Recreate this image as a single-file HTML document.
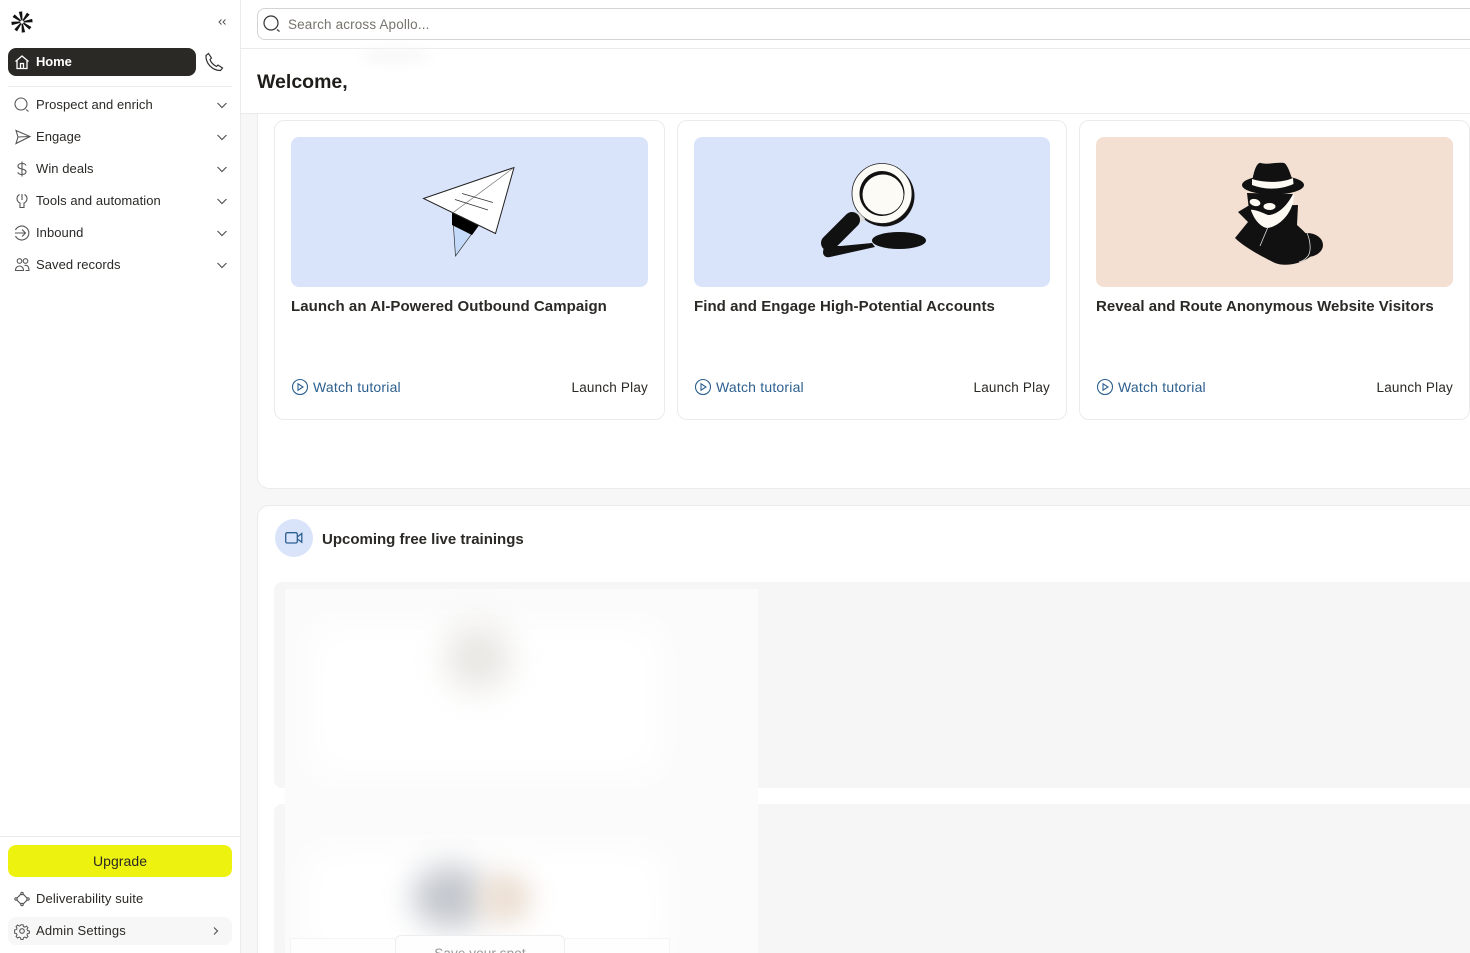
<!DOCTYPE html>
<html><head><meta charset="utf-8"><style>
*{box-sizing:border-box}
html,body{margin:0;padding:0;width:1470px;height:953px;overflow:hidden;background:#fff;font-family:"Liberation Sans",sans-serif;color:#2b2925}
#root{position:relative;width:1470px;height:953px;overflow:hidden}
.a{position:absolute}
.t{position:absolute;white-space:nowrap;font-size:13px;line-height:16px;letter-spacing:.06px}
.card{position:absolute;top:120px;height:300px;background:#fff;border:1px solid #ebebeb;border-radius:10px}
.img{position:absolute;top:137px;height:150px;border-radius:8px}
.ct{position:absolute;top:298px;font-size:15px;line-height:18px;font-weight:700;letter-spacing:.06px;white-space:nowrap}
.wt{position:absolute;top:379px;font-size:14px;line-height:16px;color:#2d5f8f;white-space:nowrap;letter-spacing:.2px}
.lp{position:absolute;top:380px;font-size:13.5px;line-height:16px;white-space:nowrap;letter-spacing:.2px}
svg{position:absolute;overflow:visible}
</style></head><body><div id="root">
<!-- main bg -->
<div class="a" style="left:241px;top:114px;width:1229px;height:839px;background:#f7f7f7"></div>
<div class="a" style="left:241px;top:48px;width:1229px;height:1px;background:#ebebeb"></div>
<div class="a" style="left:241px;top:113px;width:1229px;height:1px;background:#ebebeb"></div>
<!-- sidebar -->
<div class="a" style="left:0;top:0;width:241px;height:953px;background:#fff;border-right:1px solid #ebebeb"></div>
<svg style="left:11px;top:11px" width="22" height="22" viewBox="0 0 22 22" fill="#111">
<g transform="rotate(-8 11 11)">
<path d="M10.300 9.300L9.300 .5h3.400L11.700 9.300Z"/>
<path transform="rotate(45 11 11)" d="M10.300 9.300L9.300 .5h3.400L11.700 9.300Z"/>
<path transform="rotate(90 11 11)" d="M10.300 9.300L9.300 .5h3.400L11.700 9.300Z"/>
<path transform="rotate(135 11 11)" d="M10.300 9.300L9.300 .5h3.400L11.700 9.300Z"/>
<path transform="rotate(180 11 11)" d="M10.300 9.300L9.300 .5h3.400L11.700 9.300Z"/>
<path transform="rotate(225 11 11)" d="M10.300 9.300L9.300 .5h3.400L11.700 9.300Z"/>
<path transform="rotate(270 11 11)" d="M10.300 9.300L9.300 .5h3.400L11.700 9.300Z"/>
<path transform="rotate(315 11 11)" d="M10.300 9.300L9.300 .5h3.400L11.700 9.300Z"/>
</g></svg>
<svg style="left:217px;top:17px" width="10" height="10" viewBox="0 0 10 10" fill="none" stroke="#555" stroke-width="1"><path d="M4.500 2.500L2 5l2.500 2.500M8.500 2.500L6 5l2.500 2.500"/></svg>
<div class="a" style="left:8px;top:48px;width:188px;height:28px;background:#2b2925;border-radius:8px"></div>
<svg style="left:14px;top:54px" width="16" height="16" viewBox="0 0 16 16" fill="none" stroke="#fff" stroke-width="1.300"><path d="M1.500 7.500L8 2l6.500 5.500M3 6.500V14.500h10V6.500M6.500 14.500V9.500h3v5"/></svg>
<div class="t" style="left:36px;top:54px;color:#fff;font-weight:700;letter-spacing:-.1px">Home</div>
<svg style="left:204px;top:52px" width="20" height="20" viewBox="0 0 20 20" fill="none" stroke="#333" stroke-width="1.200"><path d="M2 3.500L4.500 1.500 7.500 6 6 7.500C7 10.500 9.500 13 12.500 14.500L14 13l4.500 3-2 2.500C8 18.500 1.500 11 2 3.500Z"/></svg>
<div class="a" style="left:8px;top:86px;width:224px;height:1px;background:#ebebeb"></div>

<svg style="left:14px;top:97px" width="16" height="16" viewBox="0 0 16 16" fill="none" stroke="#555" stroke-width="1.100"><circle cx="7" cy="7" r="6"/><path d="M12 12.500l2.500 2"/></svg>
<div class="t" style="left:36px;top:97px">Prospect and enrich</div>
<svg style="left:15px;top:129px" width="16" height="16" viewBox="0 0 16 16" fill="none" stroke="#555" stroke-width="1.100"><path d="M1 1.500L15 7.500 1 14.500 3 8ZM3 8L15 7.500"/></svg>
<div class="t" style="left:36px;top:129px">Engage</div>
<svg style="left:14px;top:161px" width="16" height="16" viewBox="0 0 16 16" fill="none" stroke="#555" stroke-width="1.100"><path d="M8 .5v15M12 4.500C11.500 3 10 2.500 8 2.500 5.500 2.500 4 3.500 4 5.200 4 9 12 7 12 10.800c0 1.700-1.500 2.700-4 2.700-2.200 0-3.700-.7-4.200-2.200"/></svg>
<div class="t" style="left:36px;top:161px">Win deals</div>
<svg style="left:14px;top:193px" width="16" height="16" viewBox="0 0 16 16" fill="none" stroke="#555" stroke-width="1.100"><path d="M5.500 1.500C3.800 2.500 3 4 3 5.500 3 8 4.800 9.700 6 10v4.500h4V10c1.200-.3 3-2 3-4.500 0-1.500-.8-3-2.500-4M8 1v6"/></svg>
<div class="t" style="left:36px;top:193px">Tools and automation</div>
<svg style="left:14px;top:225px" width="16" height="16" viewBox="0 0 16 16" fill="none" stroke="#555" stroke-width="1.100"><path d="M1.500 5A7 7 0 1 1 1.500 11M1 8h10M8 4.500L11.500 8 8 11.500"/></svg>
<div class="t" style="left:36px;top:225px">Inbound</div>
<svg style="left:14px;top:257px" width="16" height="16" viewBox="0 0 16 16" fill="none" stroke="#555" stroke-width="1.100"><circle cx="5.500" cy="4" r="2.300"/><circle cx="11.500" cy="4" r="2.300"/><path d="M1.500 13.500c0-6 8-6 8 0ZM10.500 8.500c2.500-.8 4.500.8 4.500 5h-3.500"/></svg>
<div class="t" style="left:36px;top:257px">Saved records</div>

<svg style="left:216px;top:99px" width="12" height="12" viewBox="0 0 12 12" fill="none" stroke="#555" stroke-width="1.200"><path d="M1.500 4L6 8.500 10.500 4"/></svg>
<svg style="left:216px;top:131px" width="12" height="12" viewBox="0 0 12 12" fill="none" stroke="#555" stroke-width="1.200"><path d="M1.500 4L6 8.500 10.500 4"/></svg>
<svg style="left:216px;top:163px" width="12" height="12" viewBox="0 0 12 12" fill="none" stroke="#555" stroke-width="1.200"><path d="M1.500 4L6 8.500 10.500 4"/></svg>
<svg style="left:216px;top:195px" width="12" height="12" viewBox="0 0 12 12" fill="none" stroke="#555" stroke-width="1.200"><path d="M1.500 4L6 8.500 10.500 4"/></svg>
<svg style="left:216px;top:227px" width="12" height="12" viewBox="0 0 12 12" fill="none" stroke="#555" stroke-width="1.200"><path d="M1.500 4L6 8.500 10.500 4"/></svg>
<svg style="left:216px;top:259px" width="12" height="12" viewBox="0 0 12 12" fill="none" stroke="#555" stroke-width="1.200"><path d="M1.500 4L6 8.500 10.500 4"/></svg>

<div class="a" style="left:0;top:836px;width:240px;height:1px;background:#ebebeb"></div>
<div class="a" style="left:8px;top:845px;width:224px;height:32px;background:#edf20f;border-radius:8px"></div>
<div class="t" style="left:8px;top:853px;width:224px;text-align:center;font-size:14px">Upgrade</div>
<svg style="left:14px;top:891px" width="16" height="16" viewBox="0 0 16 16" fill="none" stroke="#555" stroke-width="1.100"><path d="M6.800 3.200L3 7M9.200 3.200L13 7M3 9.200L6.800 13M13 9.200L9.200 13"/><circle cx="8" cy="2.500" r="1.200"/><circle cx="2" cy="8" r="1.200"/><circle cx="14" cy="8" r="1.200"/><circle cx="8" cy="13.500" r="1.200"/></svg>
<div class="t" style="left:36px;top:891px;letter-spacing:.13px">Deliverability suite</div>
<div class="a" style="left:8px;top:917px;width:224px;height:28px;background:#f7f7f7;border-radius:8px"></div>
<svg style="left:14px;top:923px" width="16" height="16" viewBox="0 0 16 16" fill="none" stroke="#555" stroke-width="1.100"><circle cx="8" cy="8" r="2.300"/><path d="M6.800 1h2.400l.4 2 1.500.7 1.800-1.100 1.700 1.700-1.100 1.800.7 1.500 2 .4v2.400l-2 .4-.7 1.500 1.100 1.800-1.700 1.700-1.800-1.100-1.500.7-.4 2H6.800l-.4-2-1.500-.7-1.800 1.100-1.700-1.700 1.100-1.800-.7-1.500-2-.4V6.800l2-.4.700-1.500-1.100-1.800 1.700-1.700 1.800 1.100 1.500-.7Z" transform="translate(.8 .8) scale(.9)"/></svg>
<div class="t" style="left:36px;top:923px;letter-spacing:.18px">Admin Settings</div>
<svg style="left:210px;top:925px" width="12" height="12" viewBox="0 0 12 12" fill="none" stroke="#555" stroke-width="1.200"><path d="M4 2.500L7.500 6 4 9.500"/></svg>

<!-- search -->
<div class="a" style="left:257px;top:8px;width:1240px;height:32px;border:1px solid #d4d4d4;border-radius:8px;background:#fff"></div>
<svg style="left:263px;top:15px" width="20" height="18" viewBox="0 0 20 18" fill="none" stroke="#333" stroke-width="1.200"><circle cx="8" cy="8" r="7"/><path d="M14 14.500l2.500 2"/></svg>
<div class="t" style="left:288px;top:16.500px;font-size:13.5px;color:#77736d;letter-spacing:.15px">Search across Apollo...</div>
<div class="t" style="left:257px;top:70px;font-size:19.5px;line-height:24px;font-weight:700;color:#1f1d1a;letter-spacing:0">Welcome,</div>
<div class="a" style="left:360px;top:50px;width:70px;height:12px;background:#f6f6f6;filter:blur(6px);border-radius:50%"></div>

<!-- top panel -->
<div class="a" style="left:257px;top:114px;width:1240px;height:375px;background:#fff;border:1px solid #ebebeb;border-top:none;border-radius:0 0 12px 12px"></div>

<div class="card" style="left:274px;width:391px"></div>
<div class="card" style="left:677px;width:390px"></div>
<div class="card" style="left:1079px;width:391px"></div>
<div class="img" style="left:291px;width:357px;background:#d9e4fb"></div>
<div class="img" style="left:694px;width:356px;background:#d9e4fb"></div>
<div class="img" style="left:1096px;width:357px;background:#f3e0d3"></div>

<!-- plane -->
<svg style="left:390px;top:150px" width="150" height="120" viewBox="0 0 150 120">
<path d="M62.500 63L65.500 106 89 74Z" fill="#c4dafb" stroke="#333" stroke-width=".7"/>
<path d="M62 63V75L82 85 90 74Z" fill="#000"/>
<path d="M33.500 48.500L124 17.500 105.500 83.500Z" fill="#fff" stroke="#222" stroke-width="1"/>
<path d="M62.500 63L124 17.500" stroke="#666" stroke-width=".6"/>
<path d="M72 43.500L103 52.500M65 49.500L98 60" stroke="#333" stroke-width=".8"/>
</svg>
<!-- magnifier -->
<svg style="left:800px;top:150px" width="150" height="120" viewBox="0 0 150 120">
<circle cx="84" cy="46" r="30.500" fill="#111"/>
<circle cx="82" cy="43.500" r="30" fill="#fdfbf5" stroke="#222" stroke-width=".8"/>
<circle cx="82" cy="43.500" r="22.500" fill="#111"/>
<ellipse cx="83" cy="44.500" rx="20.500" ry="20" fill="#fdfbf5"/>
<path d="M56 64l7 7" stroke="#ddd" stroke-width="6"/>
<path d="M52 70L29 93" stroke="#111" stroke-width="16" stroke-linecap="round"/>
<path d="M24 96L41 96L72 93L75 97L30 107C25 108 23 105 23 102Z" fill="#111"/>
<ellipse cx="99" cy="90.500" rx="27" ry="8.500" fill="#111"/>
</svg>
<!-- spy -->
<svg style="left:1210px;top:150px" width="130" height="120" viewBox="0 0 130 120">
<ellipse cx="97" cy="95" rx="16" ry="12" fill="#111"/>
<path d="M38 56L28 62 38 72 25 88C35 98 55 108 65 113 75 117 90 114 100 107L100 90C96 82 90 78 87 75L88 55Z" fill="#111"/>
<path d="M38 44C39 66 50 78 58 78 70 76 84 62 84 44Z" fill="#fdfaf3"/>
<path d="M37 43L39 60C45 59 50 62 58 65 66 65 76 58 83 44Z" fill="#111"/>
<ellipse cx="45" cy="52.500" rx="5.500" ry="3.500" fill="#fdfaf3" transform="rotate(15 45 52.500)"/>
<ellipse cx="59.500" cy="56.500" rx="6" ry="3.500" fill="#fdfaf3"/>
<ellipse cx="63" cy="35" rx="31" ry="9.500" fill="#111"/>
<path d="M42 32C44 20 47 12 51 13 57 15 66 12 74 13 77 14 80 22 83 32Z" fill="#111"/>
<path d="M42 29C55 33 72 33 83 28L83.500 34C70 40 55 40 42 35Z" fill="#fdfaf3"/>
<path d="M58 77L50 96M97 83C101 92 101 102 98 106 95 110 92 111 89 112" stroke="#ddd" stroke-width=".8" fill="none"/>
</svg>

<div class="ct" style="left:291px">Launch an AI-Powered Outbound Campaign</div>
<div class="ct" style="left:694px">Find and Engage High-Potential Accounts</div>
<div class="ct" style="left:1096px;letter-spacing:.03px">Reveal and Route Anonymous Website Visitors</div>

<svg style="left:292px;top:379px" width="16" height="16" viewBox="0 0 16 16" fill="none" stroke="#2d5f8f" stroke-width="1.100"><circle cx="8" cy="8" r="7.500"/><path d="M6 4.800v6.400L11 8Z"/></svg>
<svg style="left:695px;top:379px" width="16" height="16" viewBox="0 0 16 16" fill="none" stroke="#2d5f8f" stroke-width="1.100"><circle cx="8" cy="8" r="7.500"/><path d="M6 4.800v6.400L11 8Z"/></svg>
<svg style="left:1097px;top:379px" width="16" height="16" viewBox="0 0 16 16" fill="none" stroke="#2d5f8f" stroke-width="1.100"><circle cx="8" cy="8" r="7.500"/><path d="M6 4.800v6.400L11 8Z"/></svg>
<div class="wt" style="left:313px">Watch tutorial</div>
<div class="wt" style="left:716px">Watch tutorial</div>
<div class="wt" style="left:1118px">Watch tutorial</div>
<div class="lp" style="right:822px">Launch Play</div>
<div class="lp" style="right:420px">Launch Play</div>
<div class="lp" style="right:17px">Launch Play</div>

<!-- second panel -->
<div class="a" style="left:257px;top:505px;width:1240px;height:460px;background:#fff;border:1px solid #ebebeb;border-radius:12px"></div>
<div class="a" style="left:275px;top:519px;width:38px;height:38px;border-radius:50%;background:#d9e4fb"></div>
<svg style="left:285px;top:531px" width="18" height="14" viewBox="0 0 18 14" fill="none" stroke="#2d5f8f" stroke-width="1.300"><rect x=".7" y="1.700" width="11.600" height="10.300" rx="1.500"/><path d="M12.300 6l4.500-3.500v8.700L12.300 8"/></svg>
<div class="t" style="left:322px;top:531px;font-size:15px;line-height:18px;font-weight:700;letter-spacing:0">Upcoming free live trainings</div>
<div class="a" style="left:274px;top:582px;width:1210px;height:206px;background:#f6f6f6;border-radius:8px"></div>
<div class="a" style="left:274px;top:804px;width:1210px;height:170px;background:#f6f6f6;border-radius:8px"></div>

<!-- blurred overlay -->
<div class="a" style="left:285px;top:589px;width:473px;height:364px;background:#fbfbfb"></div>
<div class="a" style="left:310px;top:625px;width:350px;height:150px;background:#fff;filter:blur(18px)"></div>
<div class="a" style="left:305px;top:850px;width:360px;height:110px;background:#fff;filter:blur(18px)"></div>
<div class="a" style="left:445px;top:625px;width:66px;height:66px;border-radius:50%;background:#e9e7e3;filter:blur(16px)"></div>
<div class="a" style="left:412px;top:865px;width:76px;height:64px;border-radius:50%;background:#c4c8ce;filter:blur(15px)"></div>
<div class="a" style="left:478px;top:872px;width:54px;height:52px;border-radius:50%;background:#ecdfd3;filter:blur(13px)"></div>
<div class="a" style="left:290px;top:938px;width:380px;height:15px;background:#fefefe;border:1px solid #f4f4f4;border-bottom:none"></div>
<div class="a" style="left:395px;top:935px;width:170px;height:18px;background:#fefefe;border:1px solid #eee;border-bottom:none;border-radius:6px 6px 0 0"></div>
<div class="t" style="left:395px;top:946px;width:170px;text-align:center;color:#999;font-size:13.5px;letter-spacing:.1px">Save your spot</div>
</div></body></html>
